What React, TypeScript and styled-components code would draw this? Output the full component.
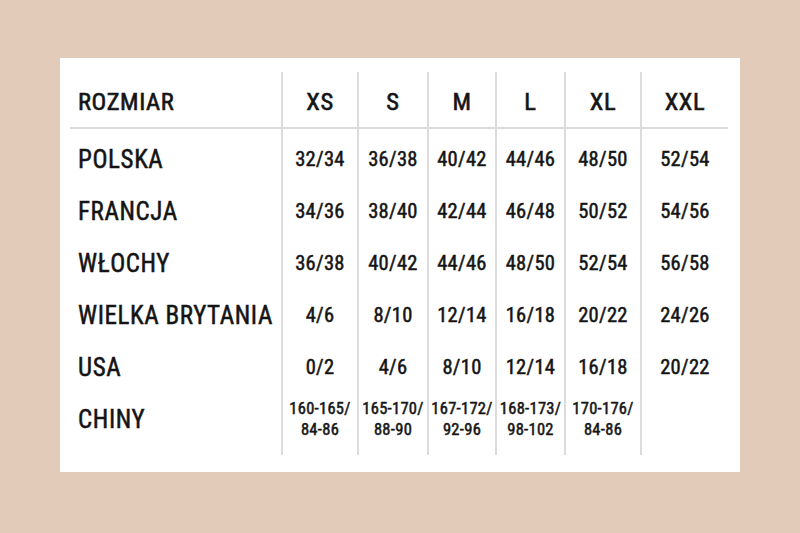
import React from 'react'
import styled, { createGlobalStyle } from 'styled-components'

const GlobalStyle = createGlobalStyle`
    html, body {
        margin: 0;
        padding: 0;
        background-color: #e2cbb9;
    }
    body {
        font-family: "Roboto Condensed", Roboto, "Liberation Sans", sans-serif;
        color: #141414;
    }
`

const Page = styled.div`
    width: 800px;
    height: 533px;
    padding: 58px 60px 61px;
    box-sizing: border-box;
`

const Card = styled.div`
    background-color: #fff;
    height: 414px;
    box-sizing: border-box;
    padding: 14px 12px 17px 10px;
`

const Table = styled.div`
    display: flex;
    height: 100%;
`

const Column = styled.div<{ $width: number; $divider?: boolean }>`
    display: flex;
    flex-direction: column;
    width: ${p => p.$width}px;
    box-sizing: border-box;
    border-left: ${p => (p.$divider ? '2px solid #dcdcdc' : 'none')};
`

const HeadCell = styled.div<{ $left?: boolean }>`
    height: 57px;
    box-sizing: border-box;
    border-bottom: 2px solid #dcdcdc;
    display: flex;
    align-items: center;
    justify-content: ${p => (p.$left ? 'flex-start' : 'center')};
    padding: ${p => (p.$left ? '4px 0 0 8px' : '4px 0 0')};
    font-size: 24.5px;
    font-weight: 400;
    letter-spacing: 0.6px;
    -webkit-text-stroke: 0.6px #141414;
`

const Body = styled.div`
    padding-top: 4px;
`

const Cell = styled.div<{ $left?: boolean; $small?: boolean }>`
    height: 52px;
    display: flex;
    align-items: center;
    justify-content: ${p => (p.$left ? 'flex-start' : 'center')};
    padding-left: ${p => (p.$left ? '8px' : '0')};
    text-align: center;
    font-size: ${p => (p.$left ? '25px' : p.$small ? '16.5px' : '20.5px')};
    line-height: ${p => (p.$small ? '21px' : 'normal')};
    font-weight: 400;
    letter-spacing: ${p => (p.$left ? '0.6px' : '0.3px')};
    -webkit-text-stroke: 0.5px #141414;
    white-space: pre-line;
`

const countries = ['POLSKA', 'FRANCJA', 'WŁOCHY', 'WIELKA BRYTANIA', 'USA', 'CHINY']

const sizes = [
    { name: 'XS', width: 76, values: ['32/34', '34/36', '36/38', '4/6', '0/2', '160-165/\n84-86'] },
    { name: 'S', width: 70, values: ['36/38', '38/40', '40/42', '8/10', '4/6', '165-170/\n88-90'] },
    { name: 'M', width: 68, values: ['40/42', '42/44', '44/46', '12/14', '8/10', '167-172/\n92-96'] },
    { name: 'L', width: 69, values: ['44/46', '46/48', '48/50', '16/18', '12/14', '168-173/\n98-102'] },
    { name: 'XL', width: 76, values: ['48/50', '50/52', '52/54', '20/22', '16/18', '170-176/\n84-86'] },
    { name: 'XXL', width: 88, values: ['52/54', '54/56', '56/58', '24/26', '20/22', ''] },
]

function App() {
    return (
        <Page>
            <GlobalStyle />
            <Card>
                <Table>
                    <Column $width={211}>
                        <HeadCell $left>ROZMIAR</HeadCell>
                        <Body>
                            {countries.map(c => (
                                <Cell key={c} $left>{c}</Cell>
                            ))}
                        </Body>
                    </Column>
                    {sizes.map(s => (
                        <Column key={s.name} $width={s.width} $divider>
                            <HeadCell>{s.name}</HeadCell>
                            <Body>
                                {s.values.map((v, i) => (
                                    <Cell key={i} $small={v.includes('\n')}>{v}</Cell>
                                ))}
                            </Body>
                        </Column>
                    ))}
                </Table>
            </Card>
        </Page>
    )
}

export default App
